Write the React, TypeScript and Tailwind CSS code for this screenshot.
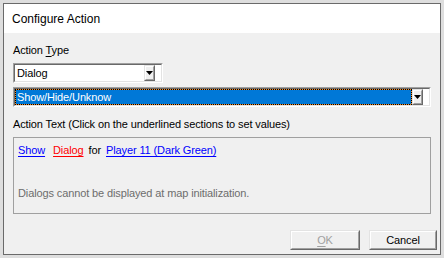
export default function App() {
    const font = { fontFamily: '"Liberation Sans", Arial, sans-serif' };

    const Arrow = () => (
        <div className="flex items-center justify-center border border-t-[#e3e3e3] border-l-[#e3e3e3] border-r-[#696969] border-b-[#696969]">
            <div className="flex h-full w-full items-center justify-center border border-t-white border-l-white border-r-[#a0a0a0] border-b-[#a0a0a0] bg-[#f0f0f0]">
                <svg width="7" height="4" viewBox="0 0 7 4">
                    <path d="M0 0h7L3.5 4z" fill="#000" />
                </svg>
            </div>
        </div>
    );

    return (
        <div className="h-[258px] w-[444px] bg-[#dedede] p-[3px]" style={font}>
            <div className="flex h-full flex-col border border-[#6a6a6a]">
                {/* title bar */}
                <div className="flex h-[29px] items-center bg-white pl-[8px] text-[12px] text-black">Configure Action</div>

                <div className="flex flex-1 flex-col bg-[#f0f0f0] pl-[9px] pr-[3px] text-[11px] leading-[13px] tracking-[-0.12px] text-black">
                    <div className="mt-[11px]">
                        Action <span className="underline underline-offset-2">T</span>ype
                    </div>

                    {/* first combo */}
                    <div className="mt-[6px] flex h-[20px] w-[150px] border border-t-[#a0a0a0] border-l-[#a0a0a0] border-r-white border-b-white">
                        <div className="flex flex-1 border border-t-[#696969] border-l-[#696969] border-r-[#e3e3e3] border-b-[#e3e3e3] bg-white">
                            <div className="flex flex-1 items-center pl-[2px]">Dialog</div>
                            <div className="flex w-[17px]">
                                <Arrow />
                            </div>
                        </div>
                    </div>

                    {/* second combo */}
                    <div className="mt-[4px] flex h-[20px] w-[418px] border border-t-[#a0a0a0] border-l-[#a0a0a0] border-r-white border-b-white">
                        <div className="flex flex-1 border border-t-[#696969] border-l-[#696969] border-r-[#e3e3e3] border-b-[#e3e3e3] bg-white">
                            <div className="flex flex-1 bg-[#f28c28]">
                                <div className="flex flex-1 items-center border border-dotted border-black bg-[#0078d7] bg-clip-padding pl-[1px] text-white">
                                    Show/Hide/Unknow
                                </div>
                            </div>
                            <div className="flex w-[17px]">
                                <Arrow />
                            </div>
                        </div>
                    </div>

                    <div className="mt-[11px]">Action Text (Click on the underlined sections to set values)</div>

                    {/* action text box */}
                    <div className="mt-[6px] flex h-[77px] w-[418px] flex-col border border-[#a0a0a0] pl-[4px] pt-[6px]">
                        <div className="flex">
                            <span className="text-[#0000ff] underline underline-offset-2">Show</span>
                            <span className="ml-[8px] text-[#ff0000] underline underline-offset-2">Dialog</span>
                            <span className="ml-[5px]">for</span>
                            <span className="ml-[5px] text-[#0000ff] underline underline-offset-2">Player 11 (Dark Green)</span>
                        </div>
                        <div className="mt-[30px] text-[#6d6d6d]">Dialogs cannot be displayed at map initialization.</div>
                    </div>

                    {/* buttons */}
                    <div className="mt-[16px] flex justify-end gap-[9px]">
                        <div className="flex h-[20px] w-[70px] border border-t-[#e3e3e3] border-l-[#e3e3e3] border-r-[#696969] border-b-[#696969]">
                            <div className="flex flex-1 items-center justify-center border border-t-white border-l-white border-r-[#a0a0a0] border-b-[#a0a0a0] text-[#a0a0a0]">
                                <span>
                                    <span className="underline underline-offset-2">O</span>K
                                </span>
                            </div>
                        </div>
                        <div className="flex h-[20px] w-[68px] border border-t-[#e3e3e3] border-l-[#e3e3e3] border-r-[#696969] border-b-[#696969]">
                            <div className="flex flex-1 items-center justify-center border border-t-white border-l-white border-r-[#a0a0a0] border-b-[#a0a0a0]">
                                Cancel
                            </div>
                        </div>
                    </div>
                </div>
            </div>
        </div>
    );
}
